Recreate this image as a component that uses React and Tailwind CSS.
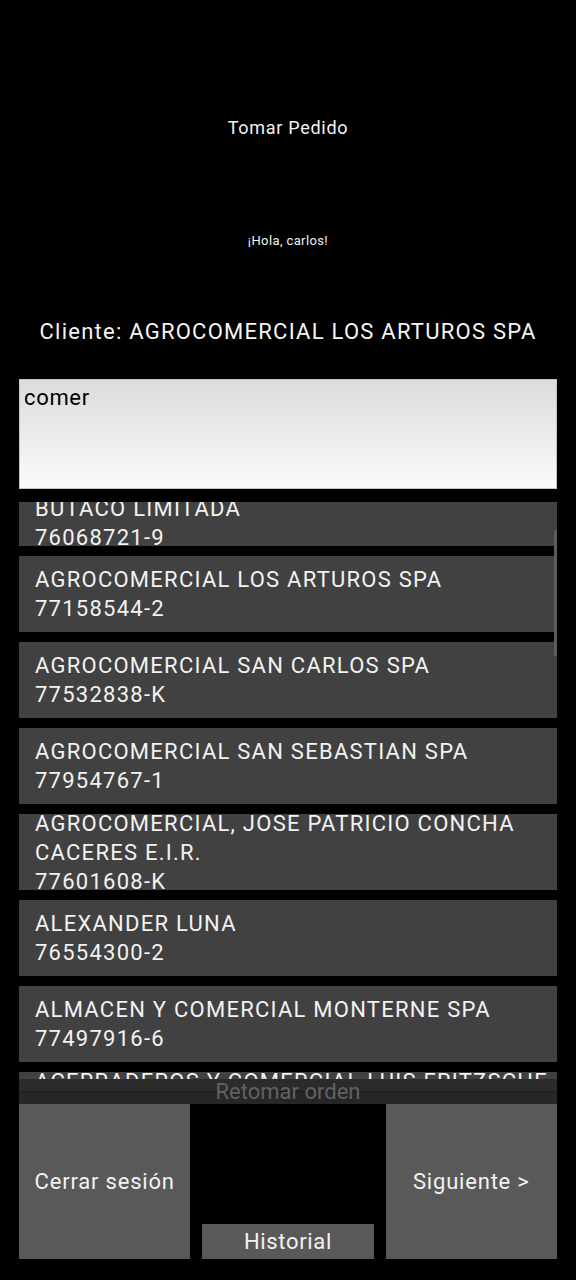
export default function App() {
  const items = [
    ["COMERCIAL E INVERSIONES", "BUTACO LIMITADA", "76068721-9"],
    ["AGROCOMERCIAL LOS ARTUROS SPA", "77158544-2"],
    ["AGROCOMERCIAL SAN CARLOS SPA", "77532838-K"],
    ["AGROCOMERCIAL SAN SEBASTIAN SPA", "77954767-1"],
    ["AGROCOMERCIAL, JOSE PATRICIO CONCHA", "CACERES E.I.R.", "77601608-K"],
    ["ALEXANDER LUNA", "76554300-2"],
    ["ALMACEN Y COMERCIAL MONTERNE SPA", "77497916-6"],
    ["ACERRADEROS Y COMERCIAL LUIS FRITZSCHE", "E.I.R.L.", "76311492-3"],
  ];
  return (
    <div
      className="w-[576px] h-[1280px] bg-black text-white overflow-hidden flex flex-col"
      style={{ fontFamily: "Roboto, 'Noto Sans', sans-serif" }}
    >
      <div className="mt-[116px] h-[24px] text-center text-[18px] leading-[24px] text-[#f2f2f2] tracking-[0.04em]">
        Tomar Pedido
      </div>
      <div className="mt-[92px] h-[18px] text-center text-[13px] leading-[18px] text-[#f2f2f2] tracking-[0.03em]">
        ¡Hola, carlos!
      </div>
      <div className="mt-[67px] h-[30px] text-center text-[22px] leading-[30px] text-[#f5f5f5] tracking-[1.25px]">
        Cliente: AGROCOMERCIAL LOS ARTUROS SPA
      </div>
      <div className="mt-[32px] mx-[19px] h-[110px] border border-[#c4c4c4] bg-gradient-to-b from-[#dcdcdc] to-[#fbfbfb] pl-[4px] pt-[3px]">
        <div className="text-[22px] leading-[30px] text-black tracking-[0.03em]">comer</div>
      </div>
      <div className="relative mt-[13px] mx-[19px] h-[577px] overflow-hidden">
        <div className="mt-[-32px] flex flex-col gap-[10px]">
          {items.map((lines, i) => (
            <div
              key={i}
              className="h-[76px] shrink-0 bg-[#414141] pl-4 pr-4 flex flex-col justify-center overflow-hidden text-[22px] leading-[29px] text-[#f2f2f2] tracking-[1.25px]"
            >
              {lines.map((l, j) => (
                <div key={j} className="whitespace-nowrap shrink-0">{l}</div>
              ))}
            </div>
          ))}
        </div>
        <div className="absolute right-0 top-[28px] w-[3px] h-[126px] bg-[#5c5c5c]" />
      </div>
      <div className="mx-[19px] h-[25px] flex flex-col relative">
        <div className="h-[12px] bg-[#2b2b2b]" />
        <div className="h-[1px] bg-[#1c1c1c]" />
        <div className="h-[12px] bg-[#262626]" />
        <div className="absolute inset-0 text-center text-[22px] leading-[25px] text-[#626262]">
          Retomar orden
        </div>
      </div>
      <div className="mx-[19px] h-[155px] grid grid-cols-3 gap-3 tracking-[0.05em]">
        <div className="bg-[#595959] flex items-center justify-center text-[22px] text-[#f2f2f2]">
          Cerrar sesión
        </div>
        <div className="flex flex-col justify-end">
          <div className="h-[35px] bg-[#595959] flex items-center justify-center text-[22px] text-[#f2f2f2] tracking-[0.03em]">
            Historial
          </div>
        </div>
        <div className="bg-[#595959] flex items-center justify-center text-[22px] text-[#f2f2f2]">
          Siguiente &gt;
        </div>
      </div>
    </div>
  );
}
